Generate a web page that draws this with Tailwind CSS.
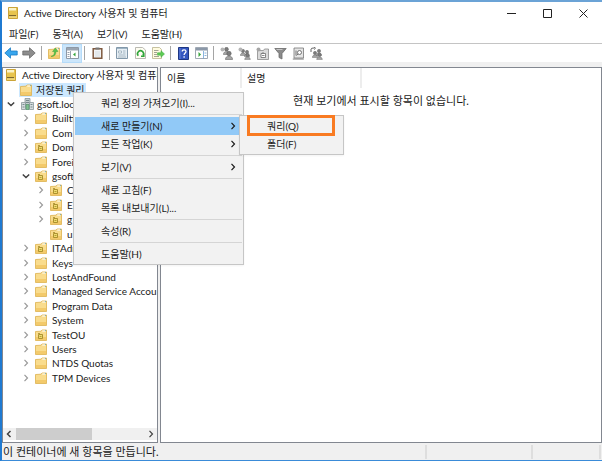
<!DOCTYPE html>
<html lang="ko">
<head>
  <meta charset="UTF-8">
  <meta name="viewport" content="width=device-width, initial-scale=1">
  <title>Active Directory 사용자 및 컴퓨터</title>
  <script src="https://cdn.jsdelivr.net/npm/@tailwindcss/browser@4"></script>
</head>
<body class="bg-[#f0f0f0] font-[Lato,'Noto_Sans_CJK_KR',sans-serif] text-[10px] leading-[14px] text-[#1a1a1a]">

  <!-- Icon symbols -->
  <svg class="hidden">
    <symbol id="folder" viewBox="0 0 12 12">
      <path d="M.5 2.500 6 2.200 7 1h4.500v10.500h-11z" fill="#f9dc8d" stroke="#dcb04c" stroke-width=".8"/>
      <path d="M7.200 2h3.500" stroke="#fff"/><path d="M10 1.600h1" stroke="#4aa0c8" stroke-width=".8"/>
      <path d="M1 8h10v3H1z" fill="#f3ca6b"/>
    </symbol>
    <symbol id="ou" viewBox="0 0 12 12">
      <use href="#folder"/>
      <path d="M3.500 5.500h4v4h-4z" fill="#f0dc70" stroke="#a58a28" stroke-width=".9"/>
      <path d="M3 4.500h2M4.500 7.500h2" stroke="#a58a28" stroke-width=".8"/>
    </symbol>
    <symbol id="console" viewBox="0 0 10 12">
      <path d="M.5.500h9v11h-9z" fill="#e8c44e" stroke="#cba438"/>
      <path d="M1 1h7v2.500H1z" fill="#fbf3c8"/><path d="M1 8h7v1.200H1z" fill="#7d672e"/><path d="M1 10h8" stroke="#f8e69a"/>
    </symbol>
    <symbol id="domain" viewBox="0 0 13 12">
      <path d="M4 .5h5v8H4z" fill="#c4cecf" stroke="#8a989b" stroke-width=".8"/>
      <path d="M.5 4.500h4v7h-4zM8.500 4.500h4v7h-4z" fill="#d5dcde" stroke="#8a989b" stroke-width=".8"/>
      <path d="M5 6.500h3v5H5z" fill="#7fc08e" stroke="#5c9474" stroke-width=".8"/>
      <path d="M5 2.500h3M5 4.500h3M1.500 6.500h2M9.500 6.500h2M1.500 9h2M9.500 9h2" stroke="#63777b" stroke-width=".8"/>
    </symbol>
    <symbol id="right" viewBox="0 0 8 8"><path d="m2.500.8 3 3.200-3 3.200" fill="none" stroke="currentColor" stroke-width="1.200"/></symbol>
    <symbol id="down" viewBox="0 0 8 8"><path d="m.8 2.500 3.200 3 3.200-3" fill="none" stroke="currentColor" stroke-width="1.500"/></symbol>
    <symbol id="user" viewBox="0 0 8 9"><circle cx="4" cy="2.500" r="2.200" fill="#7c7c7c" stroke="#555" stroke-width=".5"/><path d="M.4 8.500C.4 3.800 7.600 3.800 7.600 8.500z" fill="#a5a5a5" stroke="#555" stroke-width=".5"/></symbol>
  </svg>

  <div class="min-h-screen flex flex-col border-t-2 border-b border-l-2 border-t-[#6ba3d6] border-b-[#3a8bd8] border-l-[#1f7ad1]">

    <!-- Title bar -->
    <header class="flex h-[22px] items-center bg-white pr-px pl-[6px]">
      <svg class="mr-[6px] h-3 w-[10px]"><use href="#console"/></svg>
      <h1 class="grow">Active Directory 사용자 및 컴퓨터</h1>
      <div class="flex h-full text-[#222]">
        <button aria-label="최소화" class="grid w-9 place-items-center"><svg viewBox="0 0 9 9" class="size-[9px]"><path d="M0 4.500h9" stroke="currentColor"/></svg></button>
        <button aria-label="최대화" class="grid w-9 place-items-center"><svg viewBox="0 0 9 9" class="size-[9px]"><path d="M.5.500h8v8h-8z" fill="none" stroke="currentColor"/></svg></button>
        <button aria-label="닫기" class="grid w-9 place-items-center"><svg viewBox="0 0 9 9" class="size-[9px]"><path d="m.5.500 8 8m0-8-8 8" stroke="currentColor"/></svg></button>
      </div>
    </header>

    <!-- Menu bar -->
    <nav class="flex h-5 items-center gap-[14px] border-b border-[#c4c4c4] bg-white pl-[7px]">
      <button>파일(F)</button>
      <button>동작(A)</button>
      <button>보기(V)</button>
      <button>도움말(H)</button>
    </nav>

    <!-- Toolbar -->
    <div class="flex h-[18px] items-center bg-white" role="toolbar">
      <button aria-label="뒤로" class="grid w-[18px] place-items-center"><svg viewBox="0 0 14 12" class="h-3 w-[14px]"><path d="M.8 6 6.500.8V4h6.700v4H6.500v3.200z" fill="#38a6ee" stroke="#1a7cc4" stroke-width=".8"/></svg></button>
      <button aria-label="앞으로" class="grid w-[18px] place-items-center"><svg viewBox="0 0 14 12" class="h-3 w-[14px]"><path d="M13.200 6 7.500.8V4H.8v4h6.700v3.200z" fill="#8d8d8d" stroke="#6b6b6b" stroke-width=".8"/></svg></button>
      <span class="mx-[3px] h-[14px] w-px bg-[#a5a5a5]"></span>
      <button aria-label="한 수준 위로" class="grid w-[18px] place-items-center"><svg viewBox="0 0 12 12" class="size-3"><use href="#folder"/><path d="M3 9.500C6 8.500 6.500 7 6.300 4.500H4.500L7.500 1l2.500 3.500H8C8 7.500 6.500 9.500 3 9.500z" fill="#5cc34f" stroke="#2f9a2b" stroke-width=".4"/></svg></button>
      <button aria-label="콘솔 트리 표시" class="grid h-[17px] w-[18px] place-items-center bg-[#cce6fb] outline outline-[#b5dbf9]"><svg viewBox="0 0 13 12" class="h-3 w-[13px]"><path d="M.5.500h12v11H.5z" fill="#fff" stroke="#8d99a6"/><path d="M1 1h11v2.500H1z" fill="#9ba6b3"/><path d="M1.500 5.500h2m-2 2h2m-2 2h2M4.500 4v7.500" stroke="#7d8a99" stroke-width=".8"/><path d="M9.500 5.500v4L7 7.500z" fill="#35a53a"/></svg></button>
      <span class="mx-[3px] h-[14px] w-px bg-[#a5a5a5]"></span>
      <button aria-label="붙여넣기" class="grid w-[18px] place-items-center"><svg viewBox="0 0 11 12" class="h-3 w-[11px]"><path d="M1.200 1.700h8.600v9.600H1.200z" fill="#f2f4f6" stroke="#7f5a40" stroke-width="1.500"/><path d="M3.500.500h4v2h-4z" fill="#777"/><path d="M3 5h5M3 7h5M3 9h5" stroke="#cbd2d8" stroke-width=".7"/></svg></button>
      <span class="mx-[3px] h-[14px] w-px bg-[#a5a5a5]"></span>
      <button aria-label="속성" class="grid w-[18px] place-items-center"><svg viewBox="0 0 12 12" class="size-3"><path d="M.5.500h11v11H.5z" fill="#e6eef4" stroke="#8298aa"/><path d="M1 1.500h10" stroke="#9fb4c4"/><path d="M2.500 4h3v2h-3zM7 4h2.500M7 6h2.500M2.500 8h7" fill="#fff" stroke="#8ba0b0" stroke-width=".7"/><path d="M2 10h8" stroke="#a9b7c0"/></svg></button>
      <button aria-label="새로 고침" class="grid w-[18px] place-items-center"><svg viewBox="0 0 11 12" class="h-3 w-[11px]"><path d="M.5.500h7L10.500 3v8.500H.5z" fill="#fffdf2" stroke="#a8a8a0" stroke-width=".8"/><path d="M3.300 8.800A3 3 0 1 1 8 8.500M8.800 6.200v3H6" fill="none" stroke="#2fa53a" stroke-width="1.600"/></svg></button>
      <button aria-label="목록 내보내기" class="grid w-[18px] place-items-center"><svg viewBox="0 0 13 12" class="h-3 w-[13px]"><path d="M.5.500h7L9.500 2.500v9h-9z" fill="#fffbe0" stroke="#b9b28c" stroke-width=".8"/><path d="M2 3.500h4.500M2 5.500h3M2 7.500h3M2 9.500h5" stroke="#8d8d80" stroke-width=".8"/><path d="M5.500 5.800h3.500V3.700l3.500 3.300L9 10.300V8.200H5.500z" fill="#5fcb55" stroke="#37a83a" stroke-width=".5"/></svg></button>
      <span class="mx-[3px] h-[14px] w-px bg-[#a5a5a5]"></span>
      <button aria-label="도움말" class="grid w-[18px] place-items-center"><svg viewBox="0 0 11 13" class="h-[13px] w-[11px]"><path d="M.5.500h10v12H.5z" fill="#3557c0" stroke="#1e3784"/><path d="M2 1v11" stroke="#6d8be0" stroke-width=".8"/><path d="M4.200 4.600C4.200 2.300 8 2.300 8 4.600 8 6 6.100 6.200 6.100 8M6.100 9.200v1.500" fill="none" stroke="#fff" stroke-width="1.300"/></svg></button>
      <button aria-label="작업 창 표시" class="grid w-[18px] place-items-center"><svg viewBox="0 0 13 12" class="h-3 w-[13px]"><path d="M.5.500h12v11H.5z" fill="#fff" stroke="#a0a9b4"/><path d="M1 1h11v2.500H1z" fill="#8b98a8"/><path d="M8.500 4v7.500M9.500 6h2m-2 2.500h2" stroke="#6da2d5" stroke-width=".8"/><path d="M3.500 5v5L6 7.500z" fill="#35a53a"/></svg></button>
      <span class="mx-[3px] h-[14px] w-px bg-[#a5a5a5]"></span>
      <button aria-label="새 사용자" class="grid w-[18px] place-items-center"><svg viewBox="0 0 13 13" class="size-[13px]"><use href="#user" x="3" y="0" width="7" height="8"/><use href="#user" x="5" y="4" width="8" height="9"/><circle cx="2.500" cy="2.500" r="2" fill="#b5b5b5"/></svg></button>
      <button aria-label="새 그룹" class="grid w-[18px] place-items-center"><svg viewBox="0 0 13 13" class="size-[13px]"><use href="#user" x="2" y="2" width="6" height="7"/><use href="#user" x="6" y="3" width="6" height="7"/><use href="#user" x="6" y="6" width="7" height="7"/><circle cx="2.500" cy="2.500" r="2" fill="#b5b5b5"/></svg></button>
      <button aria-label="새 조직 구성 단위" class="grid w-[18px] place-items-center"><svg viewBox="0 0 13 13" class="size-[13px]"><path d="M1.500 3.500h6l1-1.500h4v10.500h-11z" fill="#dadada" stroke="#8b8b8b" stroke-width=".8"/><path d="M5 6.500h4.500v4H5zM7 5v1.500M6 8.500h2.500" fill="#fff" stroke="#6b6b6b" stroke-width=".8"/><circle cx="2.500" cy="2.500" r="2" fill="#a5a5a5"/></svg></button>
      <button aria-label="필터" class="grid w-[18px] place-items-center"><svg viewBox="0 0 13 13" class="size-[13px]"><path d="M.8 1.500h11.400L8 6.500V12l-3-1.500v-4z" fill="#8b8b8b" stroke="#6b6b6b" stroke-width=".8"/><path d="M2.500 2.500h6" stroke="#c5c5c5"/></svg></button>
      <button aria-label="찾기" class="grid w-[18px] place-items-center"><svg viewBox="0 0 13 13" class="size-[13px]"><path d="M2 1h9.500v10H2z" fill="#e5e5e5" stroke="#777" stroke-width=".8"/><path d="M.8 12h11" stroke="#777"/><path d="M4 3.500v5M4.500 8.500 6 7" stroke="#777"/><circle cx="7.500" cy="5.500" r="2" fill="#fff" stroke="#666" stroke-width=".9"/></svg></button>
      <button aria-label="그룹에 추가" class="grid w-[18px] place-items-center"><svg viewBox="0 0 13 13" class="size-[13px]"><use href="#user" x="2" y="4" width="6" height="7"/><use href="#user" x="6" y="2" width="6" height="7"/><use href="#user" x="6" y="6" width="7" height="7"/><path d="M1 5V2q0-1 3-1M4 0l1.500 1.200L4 2.500" fill="none" stroke="#666"/></svg></button>
    </div>

    <!-- Panes -->
    <main class="mt-[5px] flex grow gap-[2px] pb-px">
      <section class="flex w-[156px] shrink-0 flex-col overflow-hidden border border-[#828790] bg-white">
        <ul class="grid h-[317px] auto-rows-fr whitespace-nowrap">
          <li class="flex items-center pl-[3px]"><svg class="mr-[6px] h-3 w-[10px] shrink-0"><use href="#console"/></svg>Active Directory 사용자 및 컴퓨터</li>
          <li class="flex items-center pl-4"><span class="flex items-center bg-[#cce8ff] px-px"><svg class="mr-1 size-3"><use href="#folder"/></svg>저장된 쿼리</span></li>
          <li class="flex items-center pl-1"><svg class="mr-[6px] size-2 text-[#404040]"><use href="#down"/></svg><svg class="mr-[3px] h-3 w-[13px]"><use href="#domain"/></svg>gsoft.local</li>
          <li class="flex items-center pl-[19px]"><svg class="mr-[5px] size-2 text-[#999]"><use href="#right"/></svg><svg class="mr-[5px] size-3"><use href="#folder"/></svg>Builtin</li>
          <li class="flex items-center pl-[19px]"><svg class="mr-[5px] size-2 text-[#999]"><use href="#right"/></svg><svg class="mr-[5px] size-3"><use href="#folder"/></svg>Com</li>
          <li class="flex items-center pl-[19px]"><svg class="mr-[5px] size-2 text-[#999]"><use href="#right"/></svg><svg class="mr-[5px] size-3"><use href="#ou"/></svg>Dom</li>
          <li class="flex items-center pl-[19px]"><svg class="mr-[5px] size-2 text-[#999]"><use href="#right"/></svg><svg class="mr-[5px] size-3"><use href="#folder"/></svg>Forei</li>
          <li class="flex items-center pl-[19px]"><svg class="mr-[5px] size-2 text-[#404040]"><use href="#down"/></svg><svg class="mr-[5px] size-3"><use href="#ou"/></svg>gsoft</li>
          <li class="flex items-center pl-[34px]"><svg class="mr-[5px] size-2 text-[#999]"><use href="#right"/></svg><svg class="mr-[5px] size-3"><use href="#ou"/></svg>C</li>
          <li class="flex items-center pl-[34px]"><svg class="mr-[5px] size-2 text-[#999]"><use href="#right"/></svg><svg class="mr-[5px] size-3"><use href="#ou"/></svg>E</li>
          <li class="flex items-center pl-[34px]"><svg class="mr-[5px] size-2 text-[#999]"><use href="#right"/></svg><svg class="mr-[5px] size-3"><use href="#ou"/></svg>g</li>
          <li class="flex items-center pl-[47px]"><svg class="mr-[5px] size-3"><use href="#ou"/></svg>u</li>
          <li class="flex items-center pl-[19px]"><svg class="mr-[5px] size-2 text-[#999]"><use href="#right"/></svg><svg class="mr-[5px] size-3"><use href="#ou"/></svg>ITAdm</li>
          <li class="flex items-center pl-[19px]"><svg class="mr-[5px] size-2 text-[#999]"><use href="#right"/></svg><svg class="mr-[5px] size-3"><use href="#folder"/></svg>Keys</li>
          <li class="flex items-center pl-[19px]"><svg class="mr-[5px] size-2 text-[#999]"><use href="#right"/></svg><svg class="mr-[5px] size-3"><use href="#folder"/></svg>LostAndFound</li>
          <li class="flex items-center pl-[19px]"><svg class="mr-[5px] size-2 shrink-0 text-[#999]"><use href="#right"/></svg><svg class="mr-[5px] size-3 shrink-0"><use href="#folder"/></svg>Managed Service Accou</li>
          <li class="flex items-center pl-[19px]"><svg class="mr-[5px] size-2 text-[#999]"><use href="#right"/></svg><svg class="mr-[5px] size-3"><use href="#folder"/></svg>Program Data</li>
          <li class="flex items-center pl-[19px]"><svg class="mr-[5px] size-2 text-[#999]"><use href="#right"/></svg><svg class="mr-[5px] size-3"><use href="#folder"/></svg>System</li>
          <li class="flex items-center pl-[19px]"><svg class="mr-[5px] size-2 text-[#999]"><use href="#right"/></svg><svg class="mr-[5px] size-3"><use href="#ou"/></svg>TestOU</li>
          <li class="flex items-center pl-[19px]"><svg class="mr-[5px] size-2 text-[#999]"><use href="#right"/></svg><svg class="mr-[5px] size-3"><use href="#folder"/></svg>Users</li>
          <li class="flex items-center pl-[19px]"><svg class="mr-[5px] size-2 text-[#999]"><use href="#right"/></svg><svg class="mr-[5px] size-3"><use href="#folder"/></svg>NTDS Quotas</li>
          <li class="flex items-center pl-[19px]"><svg class="mr-[5px] size-2 text-[#999]"><use href="#right"/></svg><svg class="mr-[5px] size-3"><use href="#folder"/></svg>TPM Devices</li>
        </ul>
        <!-- Horizontal scrollbar -->
        <div class="mt-auto mb-[2px] flex h-3 items-center bg-[#f0f0f0] px-[2px] text-[#404040]">
          <svg viewBox="0 0 8 8" class="size-2"><path d="M5.500 1 2.500 4l3 3" fill="none" stroke="currentColor" stroke-width="1.500"/></svg>
          <div class="mx-[3px] h-full grow"><div class="h-full w-[59%] bg-[#cdcdcd]"></div></div>
          <svg class="size-2"><use href="#right"/></svg>
        </div>
      </section>

      <section class="grow border border-[#828790] bg-white">
        <div class="flex h-5 items-center">
          <div class="w-[81px] border-r-2 border-[#ededed] pl-[6px] leading-5">이름</div>
          <div class="w-[120px] border-r-2 border-[#ededed] pl-[5px] leading-5">설명</div>
        </div>
        <p class="mt-[6px] text-center text-[11px]">현재 보기에서 표시할 항목이 없습니다.</p>
      </section>
    </main>

    <!-- Status bar -->
    <footer class="flex h-4 items-center pr-px pl-px text-[11px]">
      <span class="grow">이 컨테이너에 새 항목을 만듭니다.</span>
      <span class="h-[14px] w-[108px] border-x-2 border-[#dedede]"></span>
      <span class="h-[14px] w-[68px] border-r-2 border-[#dedede]"></span>
    </footer>
  </div>

  <!-- Context menu -->
  <div role="menu" class="absolute top-[92px] left-[73px] w-[171px] border border-[#c6c6c6] bg-[#f2f2f2] p-px shadow-xs">
    <button role="menuitem" class="flex h-[18px] w-full items-center pl-[26px]">쿼리 정의 가져오기(I)...</button>
    <hr class="my-[2px] ml-[25px] border-[#d5d5d5]">
    <button role="menuitem" class="flex h-[18px] w-full items-center justify-between bg-[#91c9f7] pr-[5px] pl-[26px]">새로 만들기(N)<svg class="size-2"><use href="#right"/></svg></button>
    <button role="menuitem" class="flex h-[18px] w-full items-center justify-between pr-[5px] pl-[26px]">모든 작업(K)<svg class="size-2"><use href="#right"/></svg></button>
    <hr class="my-[2px] ml-[25px] border-[#d5d5d5]">
    <button role="menuitem" class="flex h-[18px] w-full items-center justify-between pr-[5px] pl-[26px]">보기(V)<svg class="size-2"><use href="#right"/></svg></button>
    <hr class="my-[2px] ml-[25px] border-[#d5d5d5]">
    <button role="menuitem" class="flex h-[18px] w-full items-center pl-[26px]">새로 고침(F)</button>
    <button role="menuitem" class="flex h-[18px] w-full items-center pl-[26px]">목록 내보내기(L)...</button>
    <hr class="my-[2px] ml-[25px] border-[#d5d5d5]">
    <button role="menuitem" class="flex h-[18px] w-full items-center pl-[26px]">속성(R)</button>
    <hr class="my-[2px] ml-[25px] border-[#d5d5d5]">
    <button role="menuitem" class="flex h-[18px] w-full items-center pl-[26px]">도움말(H)</button>
  </div>

  <!-- Submenu -->
  <div role="menu" class="absolute top-[115px] left-[239px] w-[105px] border border-[#c6c6c6] bg-[#f2f2f2] p-px shadow-xs">
    <button role="menuitem" class="flex h-[18px] w-full items-center pl-[26px]">쿼리(Q)</button>
    <button role="menuitem" class="flex h-[18px] w-full items-center pl-[26px]">폴더(F)</button>
    <div class="absolute -top-px left-[7px] h-[21px] w-[88px] border-3 border-[#f97b22]"></div>
  </div>

</body>
</html>
